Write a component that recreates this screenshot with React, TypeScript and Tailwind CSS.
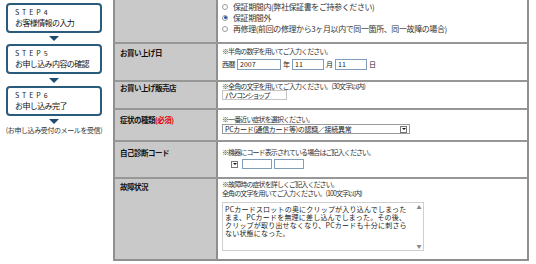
import React from 'react';

const jp = { fontFamily: '"Noto Sans CJK JP", "Noto Sans", sans-serif' };

const StepBox: React.FC<{ step: string; title: string }> = ({ step, title }) => (
  <div className="w-[96px] h-[30px] border-2 border-[#2b5b7b] rounded-[4px] pl-[7px] pt-[3px] bg-white">
    <div className="text-[7px] leading-[9px] tracking-[3px] text-[#222]">{step}</div>
    <div className="text-[8px] leading-[11px] tracking-[-0.6px] text-[#111]">{title}</div>
  </div>
);

const Arrow: React.FC<{ h: string }> = ({ h }) => (
  <div className={`w-[96px] ${h} flex items-center justify-center`}>
    <div className="w-0 h-0 border-l-[5px] border-r-[5px] border-t-[5px] border-l-transparent border-r-transparent border-t-[#1d4c70]" />
  </div>
);

const Radio: React.FC<{ checked?: boolean; label: string }> = ({ checked, label }) => (
  <div className="flex items-center h-[11px]">
    <span className="w-[6px] h-[6px] rounded-full border border-[#9a9a9a] bg-white flex items-center justify-center">
      {checked && <span className="w-[3px] h-[3px] rounded-full bg-[#1b4fa8]" />}
    </span>
    <span className="ml-[5px] text-[8px] tracking-[-0.4px] text-[#333]">{label}</span>
  </div>
);

const Note: React.FC<{ children: React.ReactNode; lh?: string }> = ({ children, lh = 'leading-[8px]' }) => (
  <div className={`text-[7px] ${lh} tracking-[-0.9px] text-[#333] whitespace-nowrap`}>{children}</div>
);

const Label: React.FC<{ children: React.ReactNode; pt: string }> = ({ children, pt }) => (
  <div className={`w-[103px] shrink-0 bg-[#c9c9c9] border-r-2 border-[#8f8f8f] pl-[5px] ${pt}`}>
    <div className="text-[7.5px] leading-[9px] font-bold tracking-[-0.5px] text-[#111] whitespace-nowrap">{children}</div>
  </div>
);

const TextInput: React.FC<{ w: string; value?: string }> = ({ w, value }) => (
  <div className={`${w} h-[11px] border border-[#7f9db9] bg-white text-[7px] leading-[9px] pl-[2px] text-[#222] whitespace-nowrap overflow-hidden`}>
    {value}
  </div>
);

const DropBtn = () => (
  <span className="w-[7px] h-[7px] border border-[#777] bg-white flex items-center justify-center">
    <span className="w-0 h-0 border-l-[2px] border-r-[2px] border-t-[2px] border-l-transparent border-r-transparent border-t-[#111]" />
  </span>
);

export default function App() {
  return (
    <div className="w-[536px] h-[264px] bg-white flex overflow-hidden" style={jp}>
      {/* steps */}
      <div className="w-[113px] shrink-0 pl-[6px] pt-[3px]">
        <StepBox step="STEP4" title="お客様情報の入力" />
        <Arrow h="h-[11px]" />
        <StepBox step="STEP5" title="お申し込み内容の確認" />
        <Arrow h="h-[12px]" />
        <StepBox step="STEP6" title="お申し込み完了" />
        <Arrow h="h-[10px]" />
        <div className="w-[102px] -ml-[3px] text-center text-[7px] leading-[9px] tracking-[-0.4px] text-[#333] whitespace-nowrap">
          (お申し込み受付のメールを受信)
        </div>
      </div>

      {/* form table */}
      <div className="w-[416px] h-[261px] border-l-2 border-r-2 border-b-2 border-[#8f8f8f] flex flex-col">
        {/* row 1 */}
        <div className="h-[42px] flex">
          <div className="w-[103px] shrink-0 bg-[#c9c9c9] border-r-2 border-[#8f8f8f]" />
          <div className="flex-1 pl-[4px] pt-[1px]">
            <Radio label="保証期間内(弊社保証書をご持参ください)" />
            <Radio checked label="保証期間外" />
            <Radio label="再修理(前回の修理から3ヶ月以内で同一箇所、同一故障の場合)" />
          </div>
        </div>

        {/* row 2 */}
        <div className="h-[38px] flex border-t-2 border-[#979797]">
          <Label pt="pt-[4px]">お買い上げ日</Label>
          <div className="flex-1 pl-[4px] pt-[3px]">
            <Note>※半角の数字を用いてご入力ください。</Note>
            <div className="mt-[4px] flex items-center text-[7px] leading-[11px] text-[#222]">
              <span className="tracking-[-0.5px]">西暦</span>
              <span className="ml-[2px]"><TextInput w="w-[44px]" value="2007" /></span>
              <span className="ml-[2px]">年</span>
              <span className="ml-[2px]"><TextInput w="w-[32px]" value="11" /></span>
              <span className="ml-[2px]">月</span>
              <span className="ml-[2px]"><TextInput w="w-[32px]" value="11" /></span>
              <span className="ml-[2px]">日</span>
            </div>
          </div>
        </div>

        {/* row 3 */}
        <div className="h-[28px] flex border-t-2 border-[#979797]">
          <Label pt="pt-[1px]">お買い上げ販売店</Label>
          <div className="flex-1 pl-[4px]">
            <Note>※全角の文字を用いてご入力ください。(30文字以内)</Note>
            <div className="w-[65px] h-[10px] border border-[#c4c4c4] bg-white text-[7px] leading-[8px] pl-[2px] tracking-[-1.5px] text-[#222] whitespace-nowrap">
              パソコンショップ
            </div>
          </div>
        </div>

        {/* row 4 */}
        <div className="h-[32px] flex border-t-2 border-[#979797]">
          <Label pt="pt-[5px]">
            症状の種類<span className="text-[#e00000]">(必須)</span>
          </Label>
          <div className="flex-1 pl-[4px] pt-[5px]">
            <Note>※一番近い症状を選択ください。</Note>
            <div className="mt-[1px] w-[188px] h-[10px] border border-[#9a9a9a] bg-white flex items-center justify-between px-[2px]">
              <span className="text-[7px] leading-[8px] tracking-[-0.3px] text-[#222] whitespace-nowrap">
                PCカード(通信カード等)の認識／接続異常
              </span>
              <DropBtn />
            </div>
          </div>
        </div>

        {/* row 5 */}
        <div className="h-[37px] flex border-t-2 border-[#979797]">
          <Label pt="pt-[6px]">自己診断コード</Label>
          <div className="flex-1 pl-[4px] pt-[6px]">
            <Note>※機器にコード表示されている場合はご記入ください。</Note>
            <div className="mt-[3px] flex items-center">
              <div className="w-[17px] h-[10px] bg-white flex items-center justify-end pr-[1px]">
                <DropBtn />
              </div>
              <div className="ml-[3px] w-[30px] h-[10px] border border-[#7f9db9] bg-white" />
              <div className="ml-[2px] w-[30px] h-[10px] border border-[#7f9db9] bg-white" />
            </div>
          </div>
        </div>

        {/* row 6 */}
        <div className="flex-1 flex border-t-2 border-[#979797]">
          <Label pt="pt-[3px]">故障状況</Label>
          <div className="flex-1 pl-[4px] pt-[1px]">
            <Note lh="leading-[9px]">※故障時の症状を詳しくご記入ください。</Note>
            <Note lh="leading-[9px]">全角の文字を用いてご入力ください。(100文字以内)</Note>
            <div className="mt-[4px] w-[202px] h-[49px] border border-[#cfcfcf] bg-white flex">
              <div className="flex-1 pl-[2px] pt-[2px] text-[7px] leading-[8px] text-[#222] whitespace-pre tracking-[0.2px] overflow-hidden">
                {'PCカードスロットの奥にクリップが入り込んでしまった\nまま、PCカードを無理に差し込んでしまった。その後、\nクリップが取り出せなくなり、PCカードも十分に刺さら\nない状態になった。'}
              </div>
              <div className="w-[8px] shrink-0 flex flex-col justify-between items-center text-[5px] leading-[6px] text-[#888] py-[1px]">
                <span>▲</span>
                <span>▼</span>
              </div>
            </div>
          </div>
        </div>
      </div>
    </div>
  );
}
